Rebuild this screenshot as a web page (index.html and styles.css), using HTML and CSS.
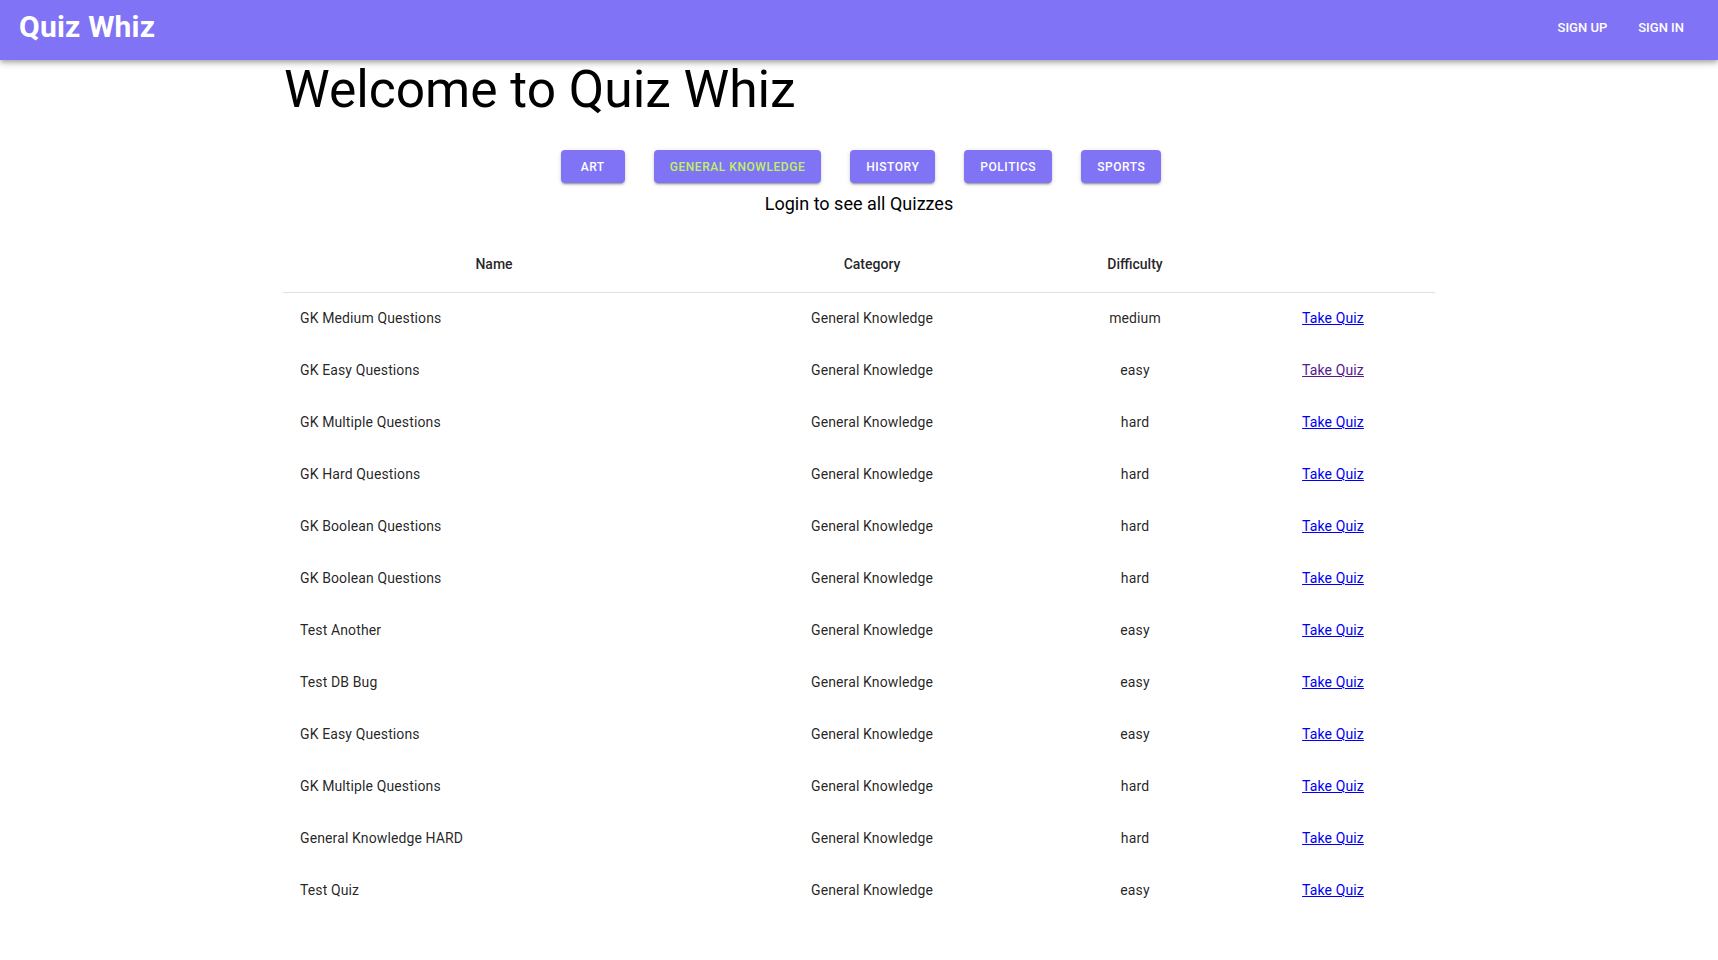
FILE: index.html
```html
<!DOCTYPE html>
<html lang="en">
<head>
<meta charset="utf-8">
<title>Quiz Whiz</title>
<link rel="stylesheet" href="styles.css">
</head>
<body>
<header class="appbar">
  <div class="logo">Quiz Whiz</div>
  <nav class="nav">
    <a class="nav-link" href="#">Sign Up</a>
    <a class="nav-link" href="#">Sign In</a>
  </nav>
</header>
<main class="container">
  <h1 class="title">Welcome to Quiz Whiz</h1>
  <div class="categories">
    <button class="cat-btn">Art</button>
    <button class="cat-btn active">General Knowledge</button>
    <button class="cat-btn">History</button>
    <button class="cat-btn">Politics</button>
    <button class="cat-btn">Sports</button>
  </div>
  <p class="login-note">Login to see all Quizzes</p>
  <table class="quiz-table">
    <colgroup>
      <col class="col-name"><col class="col-cat"><col class="col-diff"><col class="col-link">
    </colgroup>
    <thead>
      <tr><th>Name</th><th>Category</th><th>Difficulty</th><th></th></tr>
    </thead>
    <tbody>
      <tr><td class="name">GK Medium Questions</td><td>General Knowledge</td><td>medium</td><td><a href="#">Take Quiz</a></td></tr>
      <tr><td class="name">GK Easy Questions</td><td>General Knowledge</td><td>easy</td><td><a class="visited" href="#">Take Quiz</a></td></tr>
      <tr><td class="name">GK Multiple Questions</td><td>General Knowledge</td><td>hard</td><td><a href="#">Take Quiz</a></td></tr>
      <tr><td class="name">GK Hard Questions</td><td>General Knowledge</td><td>hard</td><td><a href="#">Take Quiz</a></td></tr>
      <tr><td class="name">GK Boolean Questions</td><td>General Knowledge</td><td>hard</td><td><a href="#">Take Quiz</a></td></tr>
      <tr><td class="name">GK Boolean Questions</td><td>General Knowledge</td><td>hard</td><td><a href="#">Take Quiz</a></td></tr>
      <tr><td class="name">Test Another</td><td>General Knowledge</td><td>easy</td><td><a href="#">Take Quiz</a></td></tr>
      <tr><td class="name">Test DB Bug</td><td>General Knowledge</td><td>easy</td><td><a href="#">Take Quiz</a></td></tr>
      <tr><td class="name">GK Easy Questions</td><td>General Knowledge</td><td>easy</td><td><a href="#">Take Quiz</a></td></tr>
      <tr><td class="name">GK Multiple Questions</td><td>General Knowledge</td><td>hard</td><td><a href="#">Take Quiz</a></td></tr>
      <tr><td class="name">General Knowledge HARD</td><td>General Knowledge</td><td>hard</td><td><a href="#">Take Quiz</a></td></tr>
      <tr><td class="name">Test Quiz</td><td>General Knowledge</td><td>easy</td><td><a href="#">Take Quiz</a></td></tr>
    </tbody>
  </table>
</main>
</body>
</html>
```
FILE: styles.css
```css
* { box-sizing: border-box; }
html, body {
  margin: 0;
  padding: 0;
  background: #fff;
  font-family: Roboto, "Liberation Sans", Arial, sans-serif;
  color: rgba(0,0,0,0.87);
}
.appbar {
  position: relative;
  z-index: 2;
  height: 60px;
  background: #8173f5;
  color: #fff;
  display: flex;
  align-items: flex-start;
  justify-content: space-between;
  padding: 12px 23px 0 19px;
  box-shadow: 0 2px 4px -1px rgba(0,0,0,0.2), 0 4px 5px 0 rgba(0,0,0,0.14), 0 1px 10px 0 rgba(0,0,0,0.12);
}
.logo {
  font-size: 30px;
  line-height: 29px;
  font-weight: 700;
  letter-spacing: 0.2px;
}
.nav {
  display: flex;
  gap: 9px;
  margin-top: 9px;
}
.nav-link {
  color: #fff;
  text-decoration: none;
  text-transform: uppercase;
  font-size: 13px;
  line-height: 13px;
  font-weight: 500;
  letter-spacing: 0;
  padding: 0 11px;
}
.container {
  max-width: 1200px;
  margin: 0 auto;
  padding: 0 24px;
}
.title {
  margin: 0;
  padding-left: 1px;
  font-size: 51.5px;
  line-height: 60px;
  font-weight: 400;
  color: #000;
}
.categories {
  display: flex;
  justify-content: center;
  gap: 29px;
  margin-top: 30px;
  padding-left: 4px;
}
.cat-btn {
  min-width: 64px;
  height: 33px;
  padding: 0 16px;
  border: none;
  border-radius: 4px;
  background: #8173f5;
  color: #fff;
  font-family: Roboto, "Liberation Sans", Arial, sans-serif;
  font-size: 12px;
  font-weight: 500;
  letter-spacing: 0.55px;
  text-transform: uppercase;
  box-shadow: 0 3px 1px -2px rgba(0,0,0,0.2), 0 2px 2px 0 rgba(0,0,0,0.14), 0 1px 5px 0 rgba(0,0,0,0.12);
  cursor: pointer;
}
.cat-btn.active { color: #bef264; }
.login-note {
  margin: 7px 0 0;
  text-align: center;
  font-size: 18px;
  line-height: 27px;
  color: #000;
}
.quiz-table {
  width: 100%;
  margin-top: 19px;
  border-collapse: collapse;
  table-layout: fixed;
  font-size: 14px;
}
.col-name { width: 422px; }
.col-cat { width: 334px; }
.col-diff { width: 192px; }
.col-link { width: 204px; }
.quiz-table th {
  padding: 16px;
  line-height: 24px;
  font-weight: 500;
  text-align: center;
  border-bottom: 1px solid #e0e0e0;
  color: rgba(0,0,0,0.87);
}
.quiz-table td {
  padding: 16px;
  line-height: 20px;
  text-align: center;
  letter-spacing: 0.12px;
  color: rgba(0,0,0,0.87);
}
.quiz-table tbody tr:first-child td { padding-top: 15px; }
.quiz-table td.name { text-align: left; padding-left: 17px; }
.quiz-table a { color: #0000ee; }
.quiz-table a.visited { color: #551a8b; }
```
